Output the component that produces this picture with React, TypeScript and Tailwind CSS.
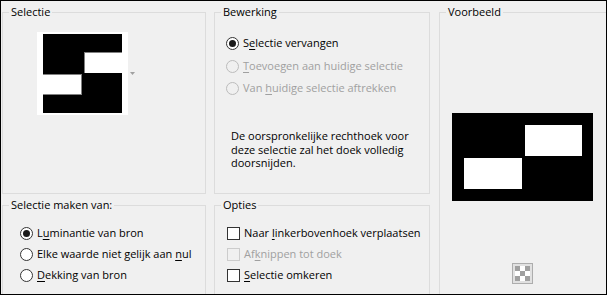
import React from "react";

function Group({
  title,
  className,
  children,
}: {
  title: string;
  className: string;
  children?: React.ReactNode;
}) {
  return (
    <div className={`border border-[#dcdcdc] flex flex-col shrink-0 ${className}`}>
      <div className="-mt-[8px] ml-[6px] px-[2px] bg-[#f0f0f0] self-start leading-[14px] h-[14px] whitespace-nowrap">
        {title}
      </div>
      {children}
    </div>
  );
}

function Radio({ checked, disabled }: { checked?: boolean; disabled?: boolean }) {
  return (
    <span
      className={`w-[13px] h-[13px] rounded-full border flex items-center justify-center shrink-0 ${
        disabled ? "border-[#bcbcbc] bg-[#f0f0f0]" : "border-[#333333] bg-white"
      }`}
    >
      {checked && <span className="w-[7px] h-[7px] rounded-full bg-[#1a1a1a]" />}
    </span>
  );
}

function Check({ disabled }: { disabled?: boolean }) {
  return (
    <span
      className={`w-[13px] h-[13px] border shrink-0 ${
        disabled ? "border-[#cccccc] bg-[#f0f0f0]" : "border-[#333333] bg-white"
      }`}
    />
  );
}

function Row({
  children,
  className,
  disabled,
}: {
  children: React.ReactNode;
  className: string;
  disabled?: boolean;
}) {
  return (
    <div
      className={`flex items-center gap-[4px] h-[16px] leading-[16px] whitespace-nowrap ${
        disabled ? "text-[#a0a0a0]" : "text-black"
      } ${className}`}
    >
      {children}
    </div>
  );
}

function U({ children }: { children: React.ReactNode }) {
  return <span className="underline underline-offset-[2px] decoration-[1px]">{children}</span>;
}

export default function App() {
  return (
    <div className="w-[607px] h-[295px] border border-black bg-[#f0f0f0] overflow-hidden font-['Open_Sans',sans-serif] text-[11px] text-black">
      <div className="flex pl-[1px] pt-[11px]">
        {/* Column 1 */}
        <div className="flex flex-col w-[204px] shrink-0">
          <Group title="Selectie" className="h-[182px]">
            <div className="flex mt-[13px] ml-[34px]">
              <svg width="91" height="83" viewBox="0 0 91 83" className="shrink-0">
                <rect x="0" y="0" width="91" height="83" fill="#ffffff" />
                <rect x="6" y="2" width="79" height="79" fill="#000000" />
                <rect x="47" y="20" width="44" height="21" fill="#ffffff" />
                <rect x="47" y="20" width="1" height="21" fill="#808080" />
                <rect x="47" y="20" width="38" height="1" fill="#808080" />
                <rect x="0" y="42" width="45" height="21" fill="#ffffff" />
                <rect x="6" y="42" width="39" height="1" fill="#808080" />
                <rect x="44" y="42" width="1" height="21" fill="#808080" />
                <rect x="6" y="62" width="39" height="1" fill="#808080" />
              </svg>
              <svg width="5" height="3" viewBox="0 0 5 3" className="ml-[2px] mt-[40px] shrink-0">
                <path d="M0 0H5L2.5 3Z" fill="#a0a0a0" />
              </svg>
            </div>
          </Group>
          <Group title="Selectie maken van:" className="mt-[11px] h-[120px]">
            <Row className="mt-[13px] ml-[17px]">
              <Radio checked />
              <span>
                L<U>u</U>minantie van bron
              </span>
            </Row>
            <Row className="mt-[5px] ml-[17px]">
              <Radio />
              <span>
                Elke waarde niet gelijk aan <U>n</U>ul
              </span>
            </Row>
            <Row className="mt-[5px] ml-[17px]">
              <Radio />
              <span>
                <U>D</U>ekking van bron
              </span>
            </Row>
          </Group>
        </div>

        {/* Column 2 */}
        <div className="flex flex-col w-[216px] ml-[8px] shrink-0">
          <Group title="Bewerking" className="h-[182px]">
            <Row className="mt-[16px] ml-[11px]">
              <Radio checked />
              <span>
                S<U>e</U>lectie vervangen
              </span>
            </Row>
            <Row className="mt-[7px] ml-[11px]" disabled>
              <Radio disabled />
              <span>
                <U>T</U>oevoegen aan huidige selectie
              </span>
            </Row>
            <Row className="mt-[6px] ml-[11px]" disabled>
              <Radio disabled />
              <span>
                Van <U>h</U>uidige selectie aftrekken
              </span>
            </Row>
            <p className="mt-[33px] ml-[16px] leading-[13.5px] whitespace-nowrap">
              De oorspronkelijke rechthoek voor
              <br />
              deze selectie zal het doek volledig
              <br />
              doorsnijden.
            </p>
          </Group>
          <Group title="Opties" className="mt-[11px] h-[120px]">
            <Row className="mt-[13px] ml-[12px]">
              <Check />
              <span>
                Naar <U>l</U>inkerbovenhoek verplaatsen
              </span>
            </Row>
            <Row className="mt-[5px] ml-[12px]" disabled>
              <Check disabled />
              <span>
                Af<U>k</U>nippen tot doek
              </span>
            </Row>
            <Row className="mt-[5px] ml-[12px]">
              <Check />
              <span>
                <U>S</U>electie omkeren
              </span>
            </Row>
          </Group>
        </div>

        {/* Column 3 */}
        <div className="flex flex-col w-[170px] ml-[9px] shrink-0">
          <Group title="Voorbeeld" className="h-[320px]">
            <svg width="141" height="88" viewBox="0 0 141 88" className="mt-[94px] ml-[12px] shrink-0">
              <rect x="0" y="0" width="141" height="88" fill="#000000" />
              <rect x="73" y="12" width="57" height="31" fill="#ffffff" />
              <rect x="12" y="45" width="58" height="31" fill="#ffffff" />
            </svg>
            <div className="mt-[62px] ml-[72px] w-[21px] h-[21px] border border-[#adadad] bg-[#e1e1e1] flex items-center justify-center">
              <svg width="15" height="15" viewBox="0 0 15 15">
                <rect x="0" y="0" width="15" height="15" fill="#ffffff" />
                <rect x="0" y="0" width="5" height="5" fill="#a0a0a0" />
                <rect x="10" y="0" width="5" height="5" fill="#a0a0a0" />
                <rect x="5" y="5" width="5" height="5" fill="#a0a0a0" />
                <rect x="0" y="10" width="5" height="5" fill="#a0a0a0" />
                <rect x="10" y="10" width="5" height="5" fill="#a0a0a0" />
              </svg>
            </div>
          </Group>
        </div>
      </div>
    </div>
  );
}
